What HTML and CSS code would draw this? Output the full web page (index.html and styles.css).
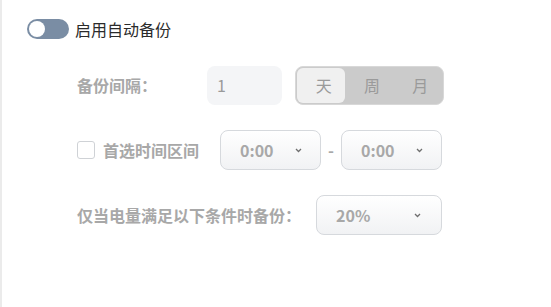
FILE: index.html
```html
<!DOCTYPE html>
<html lang="zh-CN">
<head>
<meta charset="utf-8">
<link rel="stylesheet" href="styles.css">
</head>
<body>
<div class="panel">
  <div class="switch-row">
    <span class="switch"><span class="knob"></span></span>
    <span class="switch-label">启用自动备份</span>
  </div>
  <div class="settings">
    <div class="row">
      <span class="label label-interval">备份间隔：</span>
      <div class="num-input">1</div>
      <div class="segmented">
        <span class="seg active">天</span>
        <span class="seg">周</span>
        <span class="seg">月</span>
      </div>
    </div>
    <div class="row">
      <span class="checkbox"></span>
      <span class="label label-range">首选时间区间</span>
      <div class="select sel-time"><span>0:00</span><svg class="chev" width="7" height="5" viewBox="0 0 7 5"><polyline points="1,1 3.5,3.5 6,1" fill="none" stroke="#6f6f6f" stroke-width="1.3"/></svg></div>
      <span class="dash">-</span>
      <div class="select sel-time"><span>0:00</span><svg class="chev" width="7" height="5" viewBox="0 0 7 5"><polyline points="1,1 3.5,3.5 6,1" fill="none" stroke="#6f6f6f" stroke-width="1.3"/></svg></div>
    </div>
    <div class="row">
      <span class="label label-battery">仅当电量满足以下条件时备份：</span>
      <div class="select sel-battery"><span>20%</span><svg class="chev" width="7" height="5" viewBox="0 0 7 5"><polyline points="1,1 3.5,3.5 6,1" fill="none" stroke="#6f6f6f" stroke-width="1.3"/></svg></div>
    </div>
  </div>
</div>
</body>
</html>
```
FILE: styles.css
```css
html, body {
  margin: 0;
  padding: 0;
  background: #ffffff;
}
body {
  font-family: "Noto Sans CJK SC", "Noto Sans", sans-serif;
}
.panel {
  height: 307px;
  box-sizing: border-box;
  border-left: 2px solid #ebebeb;
  padding-left: 25px;
  padding-top: 19px;
}
.switch-row {
  display: flex;
  align-items: center;
  height: 20px;
}
.switch {
  width: 42px;
  height: 20px;
  border-radius: 10px;
  background: #7a8da4;
  display: flex;
  align-items: center;
  padding-left: 2px;
  box-sizing: border-box;
}
.knob {
  width: 16px;
  height: 16px;
  border-radius: 50%;
  background: #ffffff;
}
.switch-label {
  margin-left: 6px;
  font-size: 16px;
  color: #2b2b2b;
  line-height: 20px;
}
.settings {
  margin-left: 50px;
  padding-top: 26px;
  display: flex;
  flex-direction: column;
  gap: 25px;
}
.row {
  display: flex;
  align-items: center;
  height: 40px;
}
.label {
  font-size: 16px;
  font-weight: bold;
  color: #a8a8a8;
  white-space: nowrap;
}
.label-interval {
  width: 130px;
}
.num-input {
  width: 75px;
  height: 39px;
  box-sizing: border-box;
  background: #f4f5f7;
  border-radius: 8px;
  padding-left: 10px;
  font-size: 16px;
  color: #9a9a9a;
  line-height: 39px;
}
.segmented {
  margin-left: 13px;
  width: 149px;
  height: 39px;
  box-sizing: border-box;
  background: #cbcbcb;
  border: 1px solid #d8d8d8;
  border-radius: 8px;
  padding: 1px;
  display: flex;
}
.seg {
  flex: 1;
  display: flex;
  align-items: center;
  justify-content: center;
  padding-left: 5px;
  font-size: 16px;
  color: #9a9a9a;
  border-radius: 6px;
}
.seg.active {
  background: #f0f0f0;
}
.checkbox {
  width: 18px;
  height: 18px;
  box-sizing: border-box;
  border: 1px solid #cfd2d6;
  border-radius: 3px;
  background: #fff;
  margin-right: 8px;
}
.label-range {
  width: 117px;
}
.select {
  height: 40px;
  box-sizing: border-box;
  border: 1px solid #d6d9dd;
  border-radius: 8px;
  background: linear-gradient(#ffffff, #f1f2f4);
  display: flex;
  align-items: center;
  justify-content: space-between;
  padding-left: 19px;
  font-size: 16px;
  font-weight: bold;
  color: #a8a8a8;
}
.sel-time {
  width: 101px;
  padding-right: 18px;
}
.sel-battery {
  width: 126px;
  margin-left: 15px;
  padding-right: 20px;
}
.dash {
  width: 20px;
  text-align: center;
  font-size: 16px;
  color: #a8a8a8;
  font-weight: bold;
}
.chev {
  display: block;
}
```
